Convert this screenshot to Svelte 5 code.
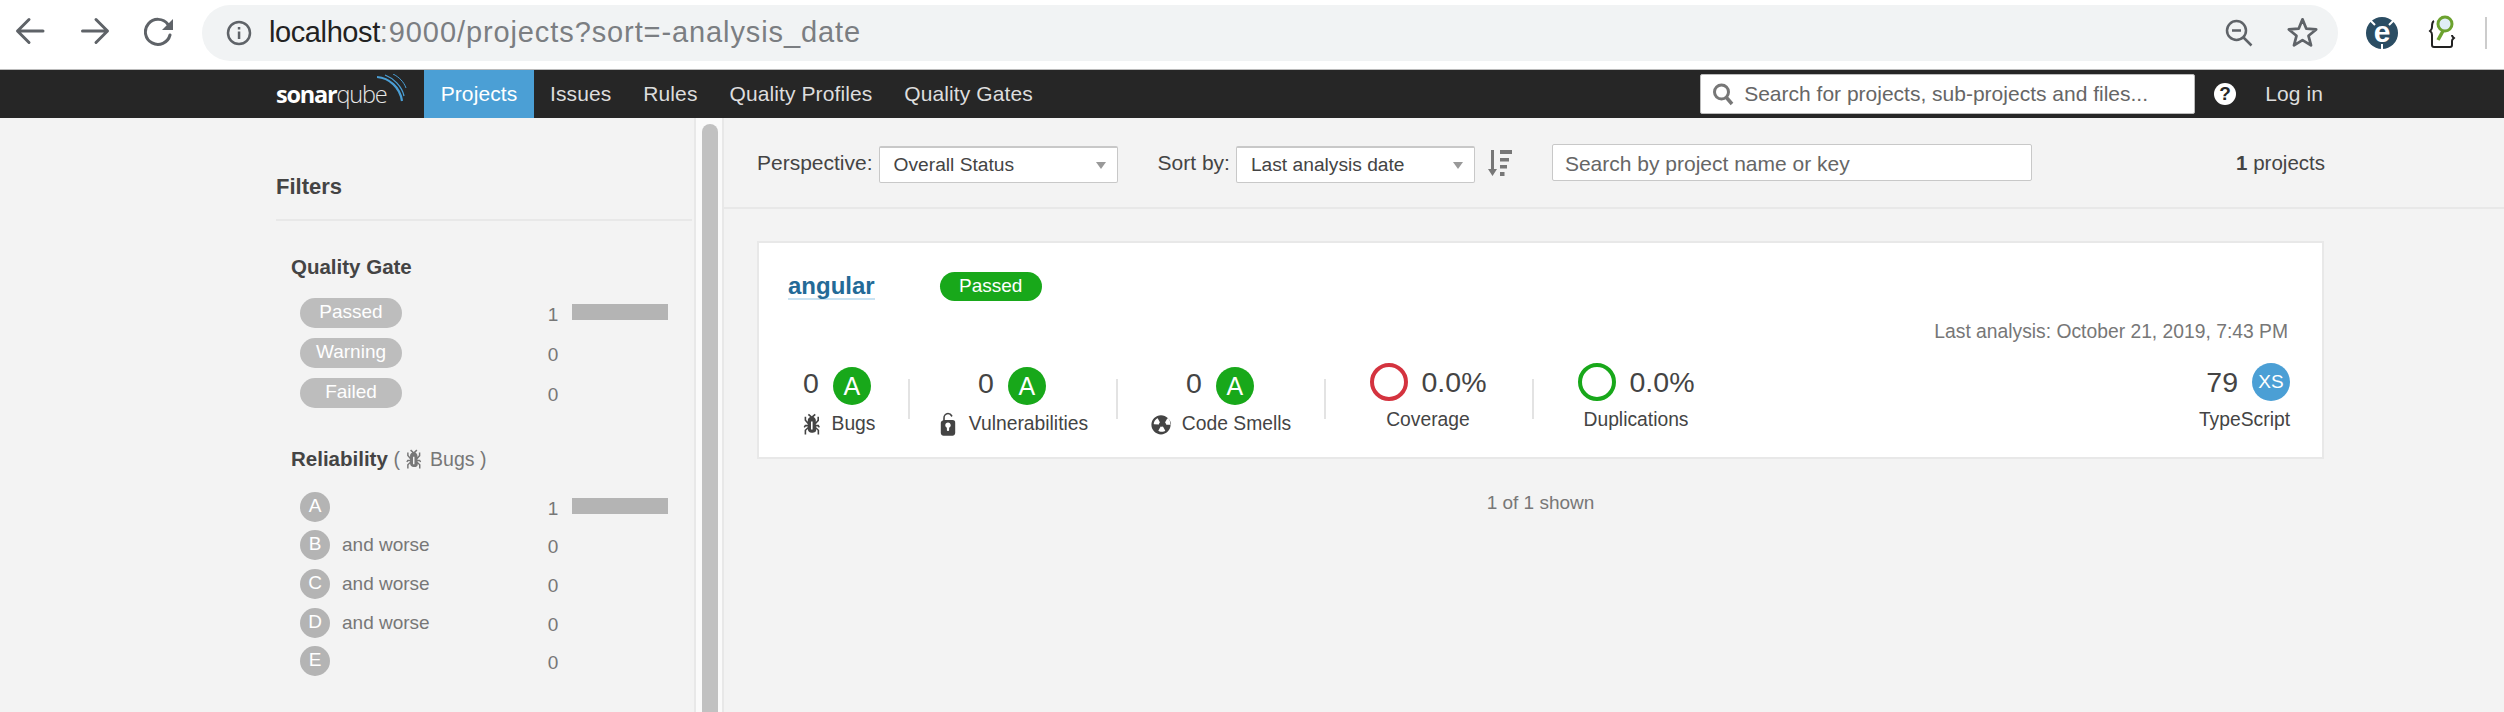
<script>
  const gates = [
    { label: 'Passed', count: 1 },
    { label: 'Warning', count: 0 },
    { label: 'Failed', count: 0 }
  ];
  const ratings = [
    { l: 'A', worse: false, count: 1 },
    { l: 'B', worse: true, count: 0 },
    { l: 'C', worse: true, count: 0 },
    { l: 'D', worse: true, count: 0 },
    { l: 'E', worse: false, count: 0 }
  ];
  const bug = 'M11 9h1.3l.5.8.8-.5-.8-1.3H11v-.3l2-2.3V3h-1v2l-1 1.2V5c-.1-.8-.7-1.5-1.4-1.9L11 1.8l-.7-.7-1.8 1.6-1.8-1.6-.7.7 1.5 1.3C6.7 3.5 6.1 4.2 6 5v1.1L5 5V3H4v2.3l2 2.3v.4H4.2l-.8 1.3.8.5.5-.8H6v.3l-2 1.9V14h1v-2.4l1-1C6 12 7.1 13 8.4 13h.8c.7 0 1.4-.3 1.8-.9.3-.4.3-.9.2-1.4l.9.9V14h1v-2.8l-2-1.9V9zm-2 2H8V6h1v5z';
  const lock = 'M10.8 5H6V3.9a2.28 2.28 0 0 1 2-2.5 2.22 2.22 0 0 1 1.8 1.2.48.48 0 0 0 .7.2.48.48 0 0 0 .2-.7A3 3 0 0 0 8 .4a3.34 3.34 0 0 0-3 3.5v1.2c-.8.2-1.500.9-1.500 1.700v6.400c0 .9.8 1.700 1.700 1.700h5.600c.9 0 1.700-.8 1.700-1.700V6.800A1.700 1.700 0 0 0 10.800 5zm-2.100 4.800v1.400c0 .4-.3.7-.7.7s-.7-.3-.7-.7V9.800c-.6-.3-1-.9-1-1.500 0-1 .8-1.700 1.700-1.700s1.700.8 1.700 1.700c0 .6-.4 1.200-1 1.500z';
  const smell = 'M8 2C4.700 2 2 4.700 2 8s2.700 6 6 6 6-2.700 6-6-2.700-6-6-6zM3.700 7.700c-.1 0-.2-.1-.2-.2 0-.4.1-1.200.6-2S5.300 4.200 5.600 4c.2-.1.3 0 .4.1l1.300 2.300c0 .1 0 .2-.1.2-.1.2-.2.3-.3.5-.1.2-.2.4-.2.5 0 .1-.1.2-.2.2l-2.800-.1zm6.800 4.100c-.3.2-1 .6-2 .6s-1.700-.4-2-.6c-.1-.1-.2-.2-.1-.3l1.300-2.300c.1-.1.2-.1.3-.1.2.1.3.1.5.1s.4 0 .5-.1c.1 0 .2 0 .3.1l1.300 2.300c.1.1 0 .2-.1.3zm.9-3.900c-.1 0-.2-.1-.2-.2 0-.2-.1-.4-.2-.5-.1-.2-.2-.3-.3-.5-.1-.1-.1-.2-.1-.3l1.300-2.300c.1-.1.2-.1.4 0 .3.2.9.7 1.400 1.500.5.8.6 1.600.6 2 0 .1-.1.2-.2.2l-2.700.1z';
  const ratingMeasures = [
    { cls: 'first', label: 'Bugs', icon: bug },
    { cls: '', label: 'Vulnerabilities', icon: lock },
    { cls: '', label: 'Code Smells', icon: smell }
  ];
</script>

<div class="page">
  <header class="chrome">
    <div class="nav-btns">
      <svg width="32" height="32" viewBox="0 0 32 32"><path d="M29 16H4M15 4.500 3.500 16 15 27.500" class="cs" /></svg>
      <svg width="32" height="32" viewBox="0 0 32 32"><path d="M3.500 16H28M17 4.500 28.500 16 17 27.500" class="cs" /></svg>
      <svg width="32" height="32" viewBox="0 0 32 32"><path d="M24 9.500A12.500 12.500 0 1 0 26 20" class="cs" /><path d="M29 4v11H18z" fill="#5f6368" /></svg>
    </div>
    <div class="omnibox">
      <svg class="info" width="28" height="28" viewBox="0 0 28 28"><circle cx="14" cy="14" r="11" fill="none" stroke="#5f6368" stroke-width="2.500" /><rect x="12.800" y="12.500" width="2.500" height="7.500" fill="#5f6368" /><rect x="12.800" y="8" width="2.500" height="2.500" fill="#5f6368" /></svg>
      <div class="url"><span class="host">localhost</span>:9000/projects?sort=-analysis_date</div>
      <svg class="zoomout" width="30" height="30" viewBox="0 0 30 30"><circle cx="12.500" cy="12.500" r="9.500" fill="none" stroke="#5f6368" stroke-width="2.500" /><path d="M8 12.500h9M19.500 19.500l8 8" stroke="#5f6368" stroke-width="2.500" fill="none" /></svg>
      <svg class="star" width="35" height="35" viewBox="0 0 32 32"><path d="M16 4l3.500 8.500 9 .7-7 5.800 2.300 8.800L16 23l-7.800 4.800 2.300-8.800-7-5.800 9-.7z" fill="none" stroke="#5f6368" stroke-width="2.500" stroke-linejoin="round" /></svg>
    </div>
    <div class="exts">
      <svg width="34" height="36" viewBox="0 0 34 36"><circle cx="17" cy="18" r="16" fill="#2b4d63" /><path d="M5 5l5 5M29 5l-5 5M17 29v6" stroke="#fff" stroke-width="2" /><text x="17" y="27" text-anchor="middle" class="ext-e">e</text></svg>
      <svg class="ext2" width="30" height="36" viewBox="0 0 30 36"><path d="M6 6c-2 1-2 3-2 6s-1 3-2 4c1 1 2 1 2 4v10c0 1.500 1 2 2 2h16c1 0 2-.5 2-2v-4c0-2 1-2 2-3-1-1-2-1-2-3" fill="none" stroke="#222" stroke-width="2" /><circle cx="17" cy="9" r="7" fill="#dfeef7" stroke="#6ca22f" stroke-width="3" /><path d="M15 16l-5 9" stroke="#6ca22f" stroke-width="3.500" /></svg>
      <span class="ext-sep"></span>
    </div>
  </header>

  <nav class="bar">
    <div class="logo">
      <span class="sonar">sonar</span><span class="qube">qube</span>
      <svg width="30" height="30" viewBox="0 0 30 30"><path d="M0 3C12 4 23 13 25 27" fill="none" stroke="#4b9fd5" stroke-width="2.200" /><path d="M8 1c8 3 17 11 19 21" fill="none" stroke="#4b9fd5" stroke-width="1.300" /><path d="M16 0c6 3 11 8 13 14" fill="none" stroke="#4b9fd5" stroke-width="1" /></svg>
    </div>
    <a class="tab active" href="#p">Projects</a>
    <a class="tab" href="#i">Issues</a>
    <a class="tab" href="#r">Rules</a>
    <a class="tab" href="#q">Quality Profiles</a>
    <a class="tab" href="#g">Quality Gates</a>
    <div class="nav-right">
      <div class="global-search">
        <svg width="22" height="24" viewBox="0 0 22 24"><circle cx="9.500" cy="10" r="7" fill="none" stroke="#777" stroke-width="3" /><path d="M14 15l6 7" stroke="#777" stroke-width="3.500" /></svg>
        <span>Search for projects, sub-projects and files...</span>
      </div>
      <svg class="help" width="24" height="24" viewBox="0 0 24 24"><circle cx="12" cy="12" r="11" fill="#fff" /><text x="12" y="18" text-anchor="middle" class="help-q">?</text></svg>
      <a class="login" href="#l">Log in</a>
    </div>
  </nav>

  <div class="body">
    <aside class="side">
      <div class="side-inner">
        <h2 class="filters">Filters</h2>
        <section class="facet">
          <h3 class="facet-title">Quality Gate</h3>
          <div class="gates">
            {#each gates as g}
              <div class="frow">
                <span class="pill">{g.label}</span>
                <span class="num">{g.count}</span>
                {#if g.count}<span class="bar-fill"></span>{/if}
              </div>
            {/each}
          </div>
        </section>
        <section class="facet second">
          <h3 class="facet-title">Reliability <span class="sub">(<svg class="sub-bug" width="22" height="22" viewBox="2 0 12 15"><path d={bug} fill="#777" fill-rule="evenodd" /></svg>Bugs )</span></h3>
          <div class="rates">
            {#each ratings as r}
              <div class="frow">
                <span class="rate">{r.l}</span>
                {#if r.worse}<span class="worse">and worse</span>{/if}
                <span class="num">{r.count}</span>
                {#if r.count}<span class="bar-fill"></span>{/if}
              </div>
            {/each}
          </div>
        </section>
      </div>
      <div class="track"><div class="thumb"></div></div>
    </aside>

    <main class="main">
      <div class="toolbar">
        <span class="lbl">Perspective:</span>
        <div class="select s1"><span>Overall Status</span><i class="caret"></i></div>
        <span class="lbl sort">Sort by:</span>
        <div class="select s2"><span>Last analysis date</span><i class="caret"></i></div>
        <svg class="sort-ic" width="24" height="26" viewBox="0 0 24 26"><path d="M3 0h3v19h3l-4.500 7L0 19h3z" fill="#777" /><path d="M12 0h12v4H12zM12 8h9v3.500h-9zM12 15h7v3.500h-7zM12 22h4.500v4H12z" fill="#777" /></svg>
        <div class="proj-search">Search by project name or key</div>
        <div class="total"><b>1</b> projects</div>
      </div>

      <div class="content">
        <article class="card">
          <div class="card-top">
            <a class="pname" href="#a">angular</a>
            <span class="status">Passed</span>
          </div>
          <div class="last">Last analysis: October 21, 2019, 7:43 PM</div>
          <div class="measures">
            {#each ratingMeasures as m, i}
              <div class="measure rated-m {m.cls}" class:divided={i > 0}>
                <div class="mval"><span class="n rated">0</span><span class="grade">A</span></div>
                <div class="mlabel"><svg width="24" height="24" viewBox="1 0 14 15"><path d={m.icon} fill="#444" fill-rule="evenodd" /></svg>{m.label}</div>
              </div>
            {/each}
            <div class="measure divided pct">
              <div class="mval"><span class="ring red"></span><span class="n">0.0%</span></div>
              <div class="mlabel">Coverage</div>
            </div>
            <div class="measure divided pct">
              <div class="mval"><span class="ring green"></span><span class="n">0.0%</span></div>
              <div class="mlabel">Duplications</div>
            </div>
            <div class="lang">
              <div class="mval"><span class="n">79</span><span class="size">XS</span></div>
              <div class="mlabel">TypeScript</div>
            </div>
          </div>
        </article>
        <div class="shown">1 of 1 shown</div>
      </div>
    </main>
  </div>
</div>

<style>
  :global(body) { margin: 0; background: #f3f3f3; }
  .page { width: 2504px; height: 712px; overflow: hidden; font-family: "Liberation Sans", Arial, sans-serif; color: #444; font-size: 20px; }
  a { text-decoration: none; color: inherit; }
  h2, h3 { margin: 0; }

  .chrome { height: 69px; background: #fff; display: flex; align-items: center; border-bottom: 1px solid #bbb; box-sizing: content-box; }
  .nav-btns { width: 202px; display: flex; gap: 33px; padding-left: 14px; margin-top: -7px; box-sizing: border-box; flex: none; }
  .cs { fill: none; stroke: #5f6368; stroke-width: 3; stroke-linecap: round; stroke-linejoin: round; }
  .omnibox { width: 2136px; height: 56px; margin-top: -4px; background: #f1f3f4; border-radius: 28px; display: flex; align-items: center; padding-left: 23px; box-sizing: border-box; flex: none; }
  .info { flex: none; }
  .url { margin-left: 16px; font-size: 29px; letter-spacing: 0.9px; color: #7b7e82; flex: 1; white-space: nowrap; }
  .host { color: #222; letter-spacing: -0.4px; }
  .zoomout { margin-right: 31px; flex: none; }
  .star { margin-right: 18px; flex: none; }
  .exts { display: flex; align-items: center; padding-left: 27px; margin-top: -4px; flex: none; }
  .ext2 { margin-left: 29px; }
  .ext-e { font: 700 30px "Liberation Sans", sans-serif; fill: #fff; }
  .ext-sep { width: 2px; height: 32px; background: #ccc; margin-left: 27px; }

  .bar { height: 48px; background: #262626; display: flex; align-items: stretch; padding-left: 276px; color: #ddd; font-size: 21px; letter-spacing: 0.1px; }
  .logo { width: 148px; display: flex; align-items: center; color: #fff; font-family: "Open Sans", "Liberation Sans", sans-serif; font-size: 23.500px; flex: none; letter-spacing: -1.2px; }
  .logo svg { margin-left: -10px; margin-top: -10px; flex: none; }
  .sonar { font-weight: 700; }
  .qube { font-weight: 300; color: #e8e8e8; }
  .tab { display: flex; align-items: center; padding: 0 16px; }
  .tab.active { background: #4b9fd5; color: #fff; width: 110px; padding: 0; justify-content: center; }
  .nav-right { margin-left: auto; display: flex; align-items: center; padding-right: 181px; }
  .global-search { width: 495px; height: 40px; background: #fff; border: 1px solid #bbb; box-sizing: border-box; border-radius: 2px; display: flex; align-items: center; padding-left: 11px; gap: 10px; color: #666; font-size: 21px; letter-spacing: 0; white-space: nowrap; }
  .help { margin-left: 18px; flex: none; }
  .help-q { font: 700 19px "Liberation Sans", sans-serif; fill: #262626; }
  .login { margin-left: 28px; color: #ddd; }

  .body { display: flex; height: 594px; }
  .side { width: 724px; flex: none; display: flex; }
  .side-inner { width: 416px; margin-left: 276px; margin-right: 2px; flex: none; }
  .filters { font-size: 22px; font-weight: 700; color: #444; height: 103px; line-height: 137px; box-sizing: border-box; border-bottom: 2px solid #e8e8e8; margin-bottom: 33px; }
  .facet { padding-left: 15px; }
  .facet-title { font-size: 20.500px; font-weight: 700; color: #444; line-height: 26px; white-space: nowrap; }
  .sub { font-weight: 400; color: #777; font-size: 19.500px; }
  .sub-bug { vertical-align: -4px; margin: 0 6px 0 2px; }
  .gates { margin: 18px 0 0 9px; display: flex; flex-direction: column; gap: 10px; }
  .frow { display: flex; align-items: center; height: 30px; position: relative; }
  .pill { width: 102px; height: 30px; border-radius: 15px; background: #bdbdbd; color: #fff; font-size: 19px; text-align: center; line-height: 27px; flex: none; }
  .num { position: absolute; left: 244px; width: 18px; text-align: center; color: #777; font-size: 19px; margin-top: 4px; }
  .bar-fill { position: absolute; left: 272px; top: 6px; width: 96px; height: 16px; background: #b4b4b4; }
  .second { margin-top: 38px; }
  .rates { margin: 19.500px 0 0 9px; display: flex; flex-direction: column; gap: 8.700px; }
  .rate { width: 30px; height: 30px; border-radius: 50%; background: #b4b4b4; color: #fff; font-size: 19px; text-align: center; line-height: 28px; flex: none; }
  .worse { margin-left: 12px; font-size: 19px; color: #777; }
  .track { width: 30px; flex: none; background: #fafafa; border-left: 2px solid #e8e8e8; border-right: 2px solid #e8e8e8; box-sizing: border-box; padding: 6px 4px 0 6px; }
  .thumb { height: 100%; background: #c1c1c1; border-radius: 8px 8px 0 0; }

  .main { flex: 1; min-width: 0; }
  .toolbar { height: 89px; border-bottom: 2px solid #e8e8e8; display: flex; align-items: center; padding-left: 33px; padding-right: 179px; }
  .lbl { font-size: 21px; color: #444; margin-right: 6px; white-space: nowrap; }
  .lbl.sort { margin-left: 40px; }
  .select { height: 37px; margin-top: 4px; background: #fff; border: 1px solid #c8c8c8; border-top-width: 2px; border-radius: 2px; box-sizing: border-box; display: flex; align-items: center; justify-content: space-between; padding: 0 11px 0 14px; font-size: 19.200px; color: #444; }
  .s1 { width: 239px; }
  .s2 { width: 239px; }
  .caret { width: 0; height: 0; border-left: 5.500px solid transparent; border-right: 5.500px solid transparent; border-top: 7px solid #999; }
  .sort-ic { margin-left: 13px; flex: none; }
  .proj-search { width: 480px; height: 37px; background: #fff; border: 1px solid #c8c8c8; border-radius: 2px; box-sizing: border-box; margin-left: 40px; padding-left: 12px; line-height: 37px; color: #666; font-size: 21px; }
  .total { margin-left: auto; font-size: 20.500px; }

  .content { padding: 32px 180px 0 33px; }
  .card { height: 218px; background: #fff; border: 2px solid #e8e8e8; box-sizing: border-box; padding: 0 32px 0 29px; position: relative; }
  .card-top { display: flex; align-items: center; height: 56px; margin-top: 15px; }
  .pname { font-size: 24px; font-weight: 700; color: #236a97; border-bottom: 2px solid #cae3f2; line-height: 25px; flex: none; }
  .status { margin-left: 65px; width: 102px; height: 29px; border-radius: 15px; background: #18a81a; color: #fff; font-size: 19px; text-align: center; line-height: 27px; }
  .last { text-align: right; font-size: 19.300px; color: #777; margin-top: 7px; line-height: 22px; padding-right: 2px; }
  .measures { display: flex; margin-top: 23px; }
  .measure { flex: none; width: 208px; box-sizing: border-box; display: flex; flex-direction: column; align-items: center; position: relative; }
  .measure.first { width: 120px; padding-right: 22px; }
  .divided::before { content: ""; position: absolute; left: 0; top: 13px; width: 2px; height: 40px; background: #e3e3e3; }
  .pct, .lang { margin-top: -4px; }
  .pct::before { top: 17px; }
  .pct .mlabel, .lang .mlabel { margin-top: 5px; }
  .rated-m .mlabel { margin-top: 5px; }
  .mval { display: flex; align-items: center; gap: 14px; height: 40px; }
  .n { font-size: 28.500px; color: #444; }
  .n.rated { margin-top: -6px; }
  .grade { width: 38px; height: 38px; border-radius: 50%; background: #18a81a; color: #fff; font-size: 25px; text-align: center; line-height: 38px; }
  .mlabel { display: flex; align-items: center; gap: 9px; font-size: 19.300px; color: #444; height: 26px; white-space: nowrap; }
  .ring { width: 38px; height: 38px; border-radius: 50%; box-sizing: border-box; border: 4px solid; }
  .red { border-color: #d4333f; }
  .green { border-color: #18a81a; }
  .lang { margin-left: auto; display: flex; flex-direction: column; align-items: flex-end; }
  .size { width: 38px; height: 38px; border-radius: 50%; background: #4b9fd5; color: #fff; font-size: 19px; text-align: center; line-height: 38px; }
  .shown { text-align: center; color: #777; font-size: 19px; margin-top: 33px; }
</style>
